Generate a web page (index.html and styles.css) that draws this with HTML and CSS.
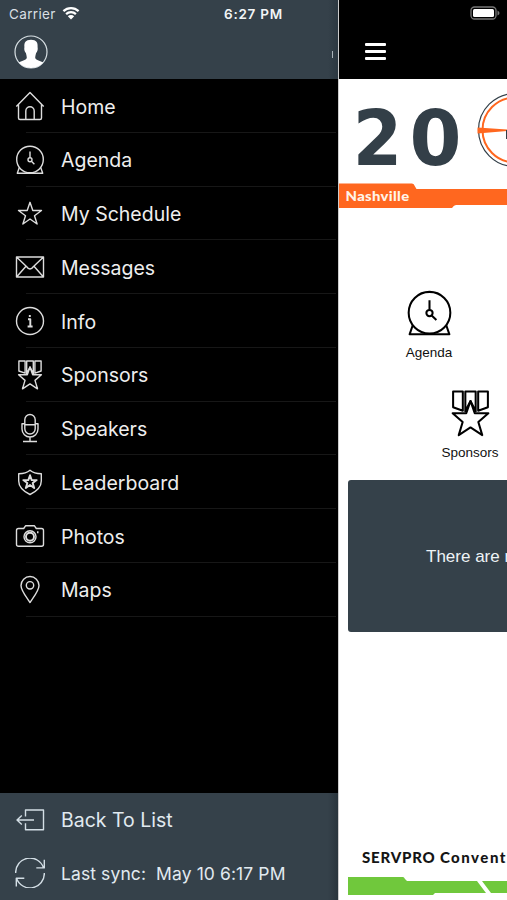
FILE: index.html
```html
<!DOCTYPE html>
<html lang="en">
<head>
<meta charset="utf-8">
<title>Event menu</title>
<link rel="stylesheet" href="styles.css">
</head>
<body>
<svg class="defs" aria-hidden="true">
  <symbol id="clock" viewBox="0 0 30 30"><circle cx="15" cy="14.5" r="13.300"/><path d="M4.300 22.500 2.300 28.300h25.400l-2-5.800M15 6.500v6M16.400 16.300l3 2.900"/><circle cx="15" cy="14.700" r="2"/></symbol>
  <symbol id="medal" viewBox="0 0 30 30"><path d="M10.100 13.200 3.900 11V1h6.200zM19.900 13.200 26.100 11V1h-6.200zM11.700 14V1h6.600v13M11.700 13.500 15 7l3.300 6.500"/><path d="m15 7 2.700 7.800h8.700l-6.400 5.600 2.500 8.400L15 23.900l-7.500 4.900 2.500-8.400-6.400-5.600h8.700z"/></symbol>
</svg>
<div class="screen">
  <aside class="drawer">
    <header class="profile">
      <div class="status">
        <span class="carrier">Carrier</span>
        <svg class="wifi" viewBox="0 0 18 14"><path d="M1.400 5.100a11 11 0 0 1 15.200 0M4.100 8.100a7 7 0 0 1 9.800 0"/><path class="solid" d="M5.800 10.200a4.600 4.600 0 0 1 6.400 0L9 13.500z"/></svg>
        <span class="time">6:27 PM</span>
      </div>
      <svg class="avatar" viewBox="0 0 34 34"><circle cx="17" cy="17" r="16"/><path d="M17 4.800c-5.500 0-7 3-6.600 7.200-.5 3 .3 4.600 1.500 6 .4 2 .9 3 .9 5-.8 2.600-5.500 2.700-8 4.600A16 16 0 0 0 17 33a16 16 0 0 0 12.200-5.400c-2.500-1.900-7.200-2-8-4.600 0-2 .5-3 .9-5 1.200-1.400 2-3 1.500-6 .4-4.200-1.100-7.200-6.600-7.200z"/></svg>
      <i class="edge-mark"></i>
    </header>
    <nav class="menu">
      <a class="row"><svg class="icon" viewBox="0 0 30 30"><path d="M1.300 15.400 15 1.500l13.700 13.900M3.500 13.500V27q0 1.500 1.500 1.500h20q1.500 0 1.500-1.500V13.500M10.800 28.500V20a4.200 4.200 0 0 1 8.400 0v8.500"/></svg><span>Home</span></a>
      <a class="row"><svg class="icon"><use href="#clock"/></svg><span>Agenda</span></a>
      <a class="row"><svg class="icon" viewBox="0 0 30 30"><path d="m15 4.300 2.800 8.200h8.700l-7 5.200 2.600 8.300-7.100-5-7.100 5 2.600-8.300-7-5.200h8.700z"/></svg><span>My Schedule</span></a>
      <a class="row"><svg class="icon" viewBox="0 0 30 30"><path d="M1.500 5h27v20h-27zM1.500 5l10 9.500q3.500 5 7 0l10-9.500M1.500 25l9.300-10.500M28.500 25l-9.300-10.500"/></svg><span>Messages</span></a>
      <a class="row"><svg class="icon" viewBox="0 0 30 30"><circle cx="15" cy="15" r="13.500"/><path class="thick" d="M13 13.200h2.300v7M12.600 20.500h5M14.800 9v2"/></svg><span>Info</span></a>
      <a class="row"><svg class="icon"><use href="#medal"/></svg><span>Sponsors</span></a>
      <a class="row"><svg class="icon" viewBox="0 0 30 30"><rect x="9.800" y="1.500" width="10.400" height="19.500" rx="5.200"/><path d="M9.800 11.800h10.400M9.800 10.800H7v5.200a8 8 0 0 0 16 0v-5.200h-2.800M15 24v4M8 28.500h14"/></svg><span>Speakers</span></a>
      <a class="row"><svg class="icon" viewBox="0 0 30 30"><path d="M15 3.200q-4 3.500-11.300 3.500V14c0 6 4 10 11.300 13.500C22.300 24 26.300 20 26.300 14V6.700Q19 6.700 15 3.200z"/><path class="thick" d="m15 8.200 1.700 4.900h5l-4 3 1.500 4.900-4.200-3-4.200 3 1.500-4.900-4-3h5z"/></svg><span>Leaderboard</span></a>
      <a class="row"><svg class="icon" viewBox="0 0 30 30"><path d="M3.500 7.500h5.200l2-2.800h8.600l2 2.800h5.200q2 0 2 2v13.700q0 2-2 2h-23q-2 0-2-2V9.500q0-2 2-2z"/><circle cx="15" cy="15.700" r="6"/><circle class="thick" cx="15" cy="15.700" r="4"/><path class="thick" d="M22 11.300h1.500"/></svg><span>Photos</span></a>
      <a class="row"><svg class="icon" viewBox="0 0 30 30"><path d="M15 1.500a9 9 0 0 0-9 9c0 5 4.600 10.500 9 17 4.400-6.500 9-12 9-17a9 9 0 0 0-9-9z"/><circle cx="15" cy="10.300" r="3.700"/></svg><span>Maps</span></a>
    </nav>
    <footer class="actions">
      <a class="action"><svg class="icon" viewBox="0 0 30 30"><path d="M10.500 11.500V5h18v19.700h-18v-6.500M19 15H2M6.800 10.500 2 15l4.800 4.500"/></svg><span>Back To List</span></a>
      <a class="action sync"><svg class="icon" viewBox="0 0 30 30"><path d="M.7 15A14.300 14.300 0 0 1 28.500 9.700M29.300 1.700v8.200h-8M29.300 15A14.300 14.300 0 0 1 1.500 20.300M1.300 28.500v-8.200h8"/></svg><span>Last sync:&nbsp; May 10 6:17 PM</span></a>
    </footer>
  </aside>
  <main class="page">
    <header class="topbar">
      <svg class="battery" viewBox="0 0 30 14"><rect class="shell" x="1" y="1" width="25" height="12" rx="3.500"/><rect class="level" x="3" y="3" width="21" height="8" rx="1.500"/><path class="tip" d="M27.500 4.500q2 1 2 2.500t-2 2.500z"/></svg>
      <div class="burger"><i></i><i></i><i></i></div>
    </header>
    <svg class="banner" viewBox="0 0 169 135">
      <text class="year" x="14.800" y="85.500" textLength="49.500" lengthAdjust="spacingAndGlyphs">2</text>
      <text class="year" x="71.500" y="85.500" textLength="52" lengthAdjust="spacingAndGlyphs">0</text>
      <circle class="ring-dark" cx="177" cy="51" r="36.500"/>
      <circle class="ring" cx="177" cy="51" r="32.500"/>
      <path class="orange" d="M139.500 48.500 169 50.500v1.500l-29.500 2.500z"/>
      <path class="slate" d="M168 51h1v9h-1z"/>
      <path class="orange" d="M0 104.500h74q2 0 3 3l1.500 2.500H169v16h-51q-2 0-4 3H0z"/>
      <text class="city" x="7.500" y="121.500" textLength="64" lengthAdjust="spacingAndGlyphs">Nashville</text>
    </svg>
    <section class="tiles">
      <div class="tile"><svg class="tile-icon"><use href="#clock"/></svg><span>Agenda</span></div>
      <div class="tile second"><svg class="tile-icon"><use href="#medal"/></svg><span>Sponsors</span></div>
    </section>
    <section class="notice">There are n</section>
    <footer class="event">
      <p>SERVPRO <span>Convent</span></p>
      <svg viewBox="0 0 159 18"><path d="M0 0h55q1 0 2 2l2 2h70l9 12H87l-2 2H0zM134 4h25v12h-16z"/></svg>
    </footer>
  </main>
</div>
</body>
</html>
```
FILE: styles.css
```css
* { box-sizing: border-box; }
body { margin: 0; background: #fff; font-family: Inter, "Liberation Sans", sans-serif; }
.defs { position: absolute; width: 0; height: 0; }
svg { display: block; }
.screen { display: grid; grid-template-columns: 338px 169px; width: 507px; height: 900px; overflow: hidden; }
.drawer { display: flex; flex-direction: column; background: #000; color: #eee; min-width: 0; }
.profile { position: relative; height: 79px; background: linear-gradient(90deg, #35414a 97%, #2c3841); }
.status { display: flex; align-items: center; height: 27px; padding-left: 9px; }
.carrier { width: 47px; font-size: 13.500px; letter-spacing: .35px; color: #d9dfe3; }
.wifi { width: 18px; height: 14px; margin-left: 6px; margin-top: -1px; fill: none; stroke: #fff; stroke-width: 2.200; }
.wifi .solid { fill: #fff; stroke: none; }
.time { margin-left: 144px; font-size: 13.500px; font-weight: 600; letter-spacing: .75px; color: #f2f5f7; white-space: nowrap; }
.avatar { width: 34px; height: 34px; margin: 8px 0 0 13.500px; fill: #fff; }
.avatar circle { fill: none; stroke: #d8e0e4; stroke-width: 1.200; }
.edge-mark { position: absolute; right: 5px; top: 51px; width: 1px; height: 7px; background: #aab3b9; }
.menu { flex: 1; }
.row { display: flex; align-items: center; height: 53.750px; padding-left: 15px; font-size: 19.500px; background: linear-gradient(#171717, #171717) 26px 100% / 310px 1px no-repeat; }
.row span, .action span { margin-left: 16px; white-space: nowrap; padding-top: 1.700px; }
.icon { flex: none; width: 30px; height: 30px; fill: none; stroke: #ddd; stroke-width: 1.400; stroke-linejoin: round; }
.thick { stroke-width: 1.900; }
.actions { height: 107px; background: linear-gradient(90deg, #35414a 97%, #29343c); color: #e1eaf0; }
.action { display: flex; align-items: center; height: 53.500px; padding-left: 15px; font-size: 19.500px; }
.action span { padding-top: 1px; }
.actions .icon { stroke: #d3dee5; }
.sync { font-size: 17.500px; letter-spacing: .1px; }
.sync span { padding-top: 0; }
.page { display: flex; flex-direction: column; background: #fff; overflow: hidden; min-width: 0; border-left: 1px solid #ccc; }
.topbar { height: 79px; flex: none; margin-left: -1px; background: #000; }
.battery { width: 30px; height: 14px; margin: 6px 0 0 132px; }
.battery .shell { fill: none; stroke: #777; stroke-width: 1.300; }
.battery .level { fill: #fff; }
.battery .tip { fill: #777; }
.burger { display: grid; gap: 4px; width: 21px; margin: 23px 0 0 26.500px; }
.burger i { height: 3px; border-radius: 1px; background: #fff; }
.banner { width: 169px; height: 135px; flex: none; margin-left: -1px; }
.year { font: 700 76px "DejaVu Sans"; fill: #333f48; }
.slate { fill: #333f48; }
.ring-dark, .ring { fill: none; stroke: #333f48; stroke-width: 1.200; }
.ring { stroke: #ff671f; stroke-width: 2; }
.orange { fill: #ff671f; }
.city { font: 900 13.500px Lato, sans-serif; letter-spacing: .3px; fill: #fff4e8; }
.tiles { display: grid; gap: 29px; padding-top: 76px; height: 266px; align-content: start; }
.tile { display: grid; justify-items: center; gap: 7px; width: 90px; margin-left: 45px; color: #111; font: 13.500px/17px "Liberation Sans", sans-serif; }
.second { margin-left: 86px; }
.tile-icon { width: 47px; height: 47px; fill: none; stroke: #000; stroke-width: 1.300; stroke-linejoin: round; }
.notice { flex: none; height: 152px; margin-left: 9px; border-radius: 3px 0 0 3px; background: #35414a; color: #eef3f6; padding-left: 78px; font: 17px/153px "Liberation Sans", sans-serif; white-space: nowrap; overflow: hidden; }
.event { margin-top: 215px; padding-left: 9px; }
.event p { margin: 0 0 9px 14px; font: 900 15px/21px Lato, sans-serif; letter-spacing: .8px; white-space: nowrap; color: #151515; }
.event p span { letter-spacing: 1.500px; }
.event svg { width: 159px; height: 18px; fill: #70c83c; }
```
